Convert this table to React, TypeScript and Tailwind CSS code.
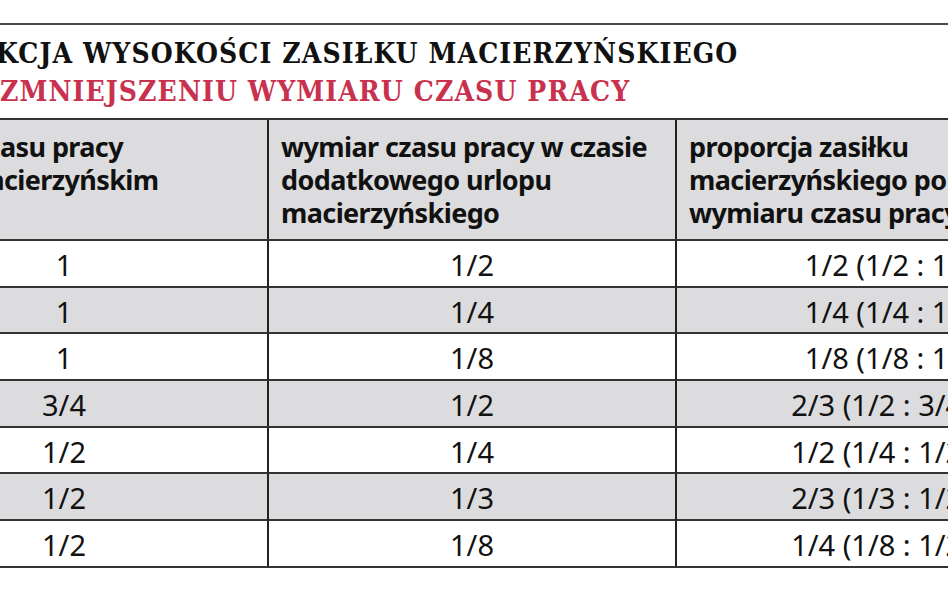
import React from 'react'

const rows = [
  { a: '1', b: '1/2', c: '1/2 (1/2 : 1)', shade: false },
  { a: '1', b: '1/4', c: '1/4 (1/4 : 1)', shade: true },
  { a: '1', b: '1/8', c: '1/8 (1/8 : 1)', shade: false },
  { a: '3/4', b: '1/2', c: '2/3 (1/2 : 3/4)', shade: true },
  { a: '1/2', b: '1/4', c: '1/2 (1/4 : 1/2)', shade: false },
  { a: '1/2', b: '1/3', c: '2/3 (1/3 : 1/2)', shade: true },
  { a: '1/2', b: '1/8', c: '1/4 (1/8 : 1/2)', shade: false },
]

const headFont = { fontFamily: '"Noto Sans", "DejaVu Sans", sans-serif' }
const bodyFont = { fontFamily: '"Noto Sans", "DejaVu Sans", sans-serif' }
const titleFont = { fontFamily: '"DejaVu Serif Condensed", "DejaVu Serif", serif' }

export default function App() {
  return (
    <div className="w-[948px] h-[593px] overflow-hidden bg-white">
      <div className="ml-[-139px] w-[1224px] pt-[23px]">
        {/* top rule */}
        <div className="h-[2px] bg-[#4a4a4a]" />

        {/* title, cut on the left like the source */}
        <div
          className="mt-[10px] text-[28px] leading-[38px] font-bold tracking-[1.1px] whitespace-nowrap font-stretch-semi-condensed"
          style={titleFont}
        >
          <div className="flex text-[#111]">
            <span className="flex w-[135px] shrink-0 justify-end">REDU</span>
            <span>KCJA WYSOKOŚCI ZASIŁKU MACIERZYŃSKIEGO</span>
          </div>
          <div className="flex text-[#c9324f]">
            <span className="flex w-[139px] shrink-0 justify-end">PRZY&nbsp;</span>
            <span>ZMNIEJSZENIU WYMIARU CZASU PRACY</span>
          </div>
        </div>

        {/* table */}
        <div className="mt-[7px] border-t-2 border-[#333]">
          <div
            className="grid grid-cols-[408px_408px_408px] h-[121px] bg-[#dcdcde] border-b-2 border-[#333] text-[27px] leading-[33px] font-bold text-[#111] font-stretch-condensed tracking-[-0.6px] whitespace-nowrap"
            style={headFont}
          >
            <div className="border-r-2 border-[#222] pt-[10px]">
              <div className="flex">
                <span className="flex w-[139px] shrink-0 justify-end">wymiar cz</span>
                <span>asu pracy</span>
              </div>
              <div className="flex">
                <span className="flex w-[143px] shrink-0 justify-end">w urlopie ma</span>
                <span>cierzyńskim</span>
              </div>
            </div>
            <div className="border-r-2 border-[#222] px-[12px] pt-[10px]">
              wymiar czasu pracy w czasie
              <br />
              dodatkowego urlopu
              <br />
              macierzyńskiego
            </div>
            <div className="px-[12px] pt-[10px]">
              proporcja zasiłku
              <br />
              macierzyńskiego po obniżeniu
              <br />
              wymiaru czasu pracy
            </div>
          </div>

          {rows.map((r, i) => (
            <div
              key={i}
              className={
                'grid grid-cols-[408px_408px_408px] h-[46.67px] border-b-2 border-[#333] text-[29px] text-[#111] ' +
                (r.shade ? 'bg-[#dcdcde]' : 'bg-white')
              }
              style={bodyFont}
            >
              <div className="border-r-2 border-[#222] flex items-center justify-center pt-[2px]">{r.a}</div>
              <div className="border-r-2 border-[#222] flex items-center justify-center pt-[2px]">{r.b}</div>
              <div className="flex items-center justify-center pt-[2px] whitespace-nowrap">{r.c}</div>
            </div>
          ))}
        </div>
      </div>
    </div>
  )
}
